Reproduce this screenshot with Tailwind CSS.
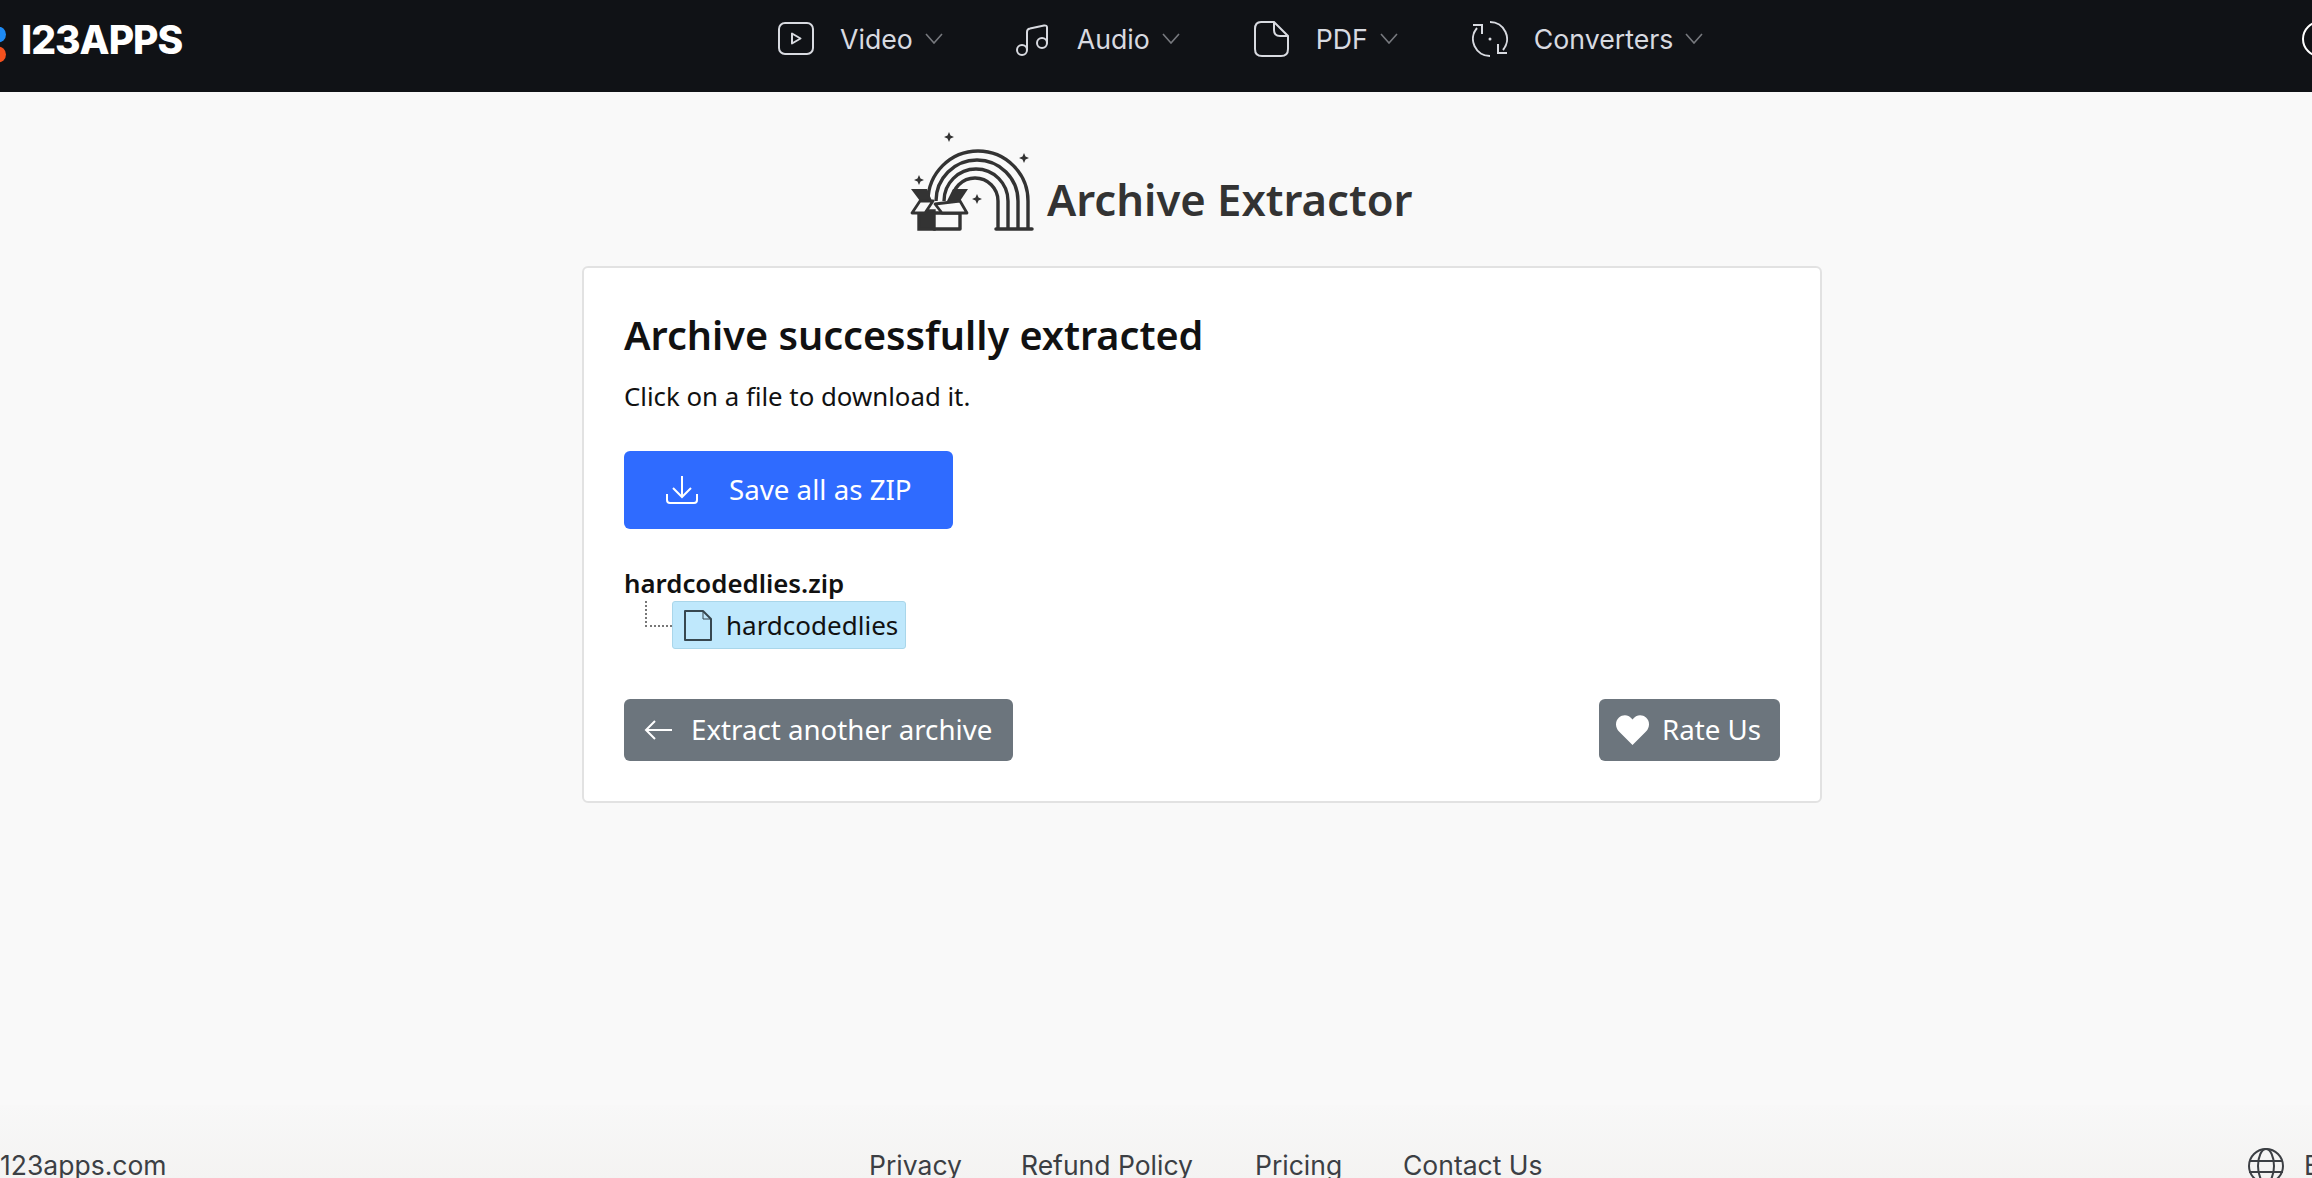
<!DOCTYPE html>
<html lang="en">
<head>
  <meta charset="UTF-8">
  <meta name="viewport" content="width=device-width, initial-scale=1.0">
  <title>Archive Extractor</title>
  <script src="https://cdn.jsdelivr.net/npm/@tailwindcss/browser@4"></script>
</head>
<body class="h-screen overflow-hidden flex flex-col bg-[#f9f9f9] font-['Noto_Sans',sans-serif]">
  <!-- top nav -->
  <header class="h-[92px] shrink-0 bg-[#101216] flex items-center font-['Inter',sans-serif] overflow-hidden">
    <svg class="w-[6px] h-[36px] shrink-0 mt-[-2px]" viewBox="0 0 6 36">
      <circle cx="-2" cy="7.5" r="8" fill="#1e8bf5"/>
      <circle cx="-2" cy="27.5" r="8" fill="#f4511e"/>
    </svg>
    <span class="ml-[15px] w-[161px] text-[39px] leading-none font-extrabold text-white tracking-[-1px] mt-[-14px]">I23APPS</span>
    <nav class="ml-[596px] flex items-center text-[26.7px] text-[#d8dae0] mt-[-14px]">
      <a class="flex items-center" href="#">
        <svg class="w-[36px] h-[36px]" viewBox="0 0 36 36" fill="none" stroke="#d8dae0" stroke-width="2"><rect x="1" y="2" width="34" height="31" rx="6"/><path d="M14 12.5v10l8.5-5z" stroke-linejoin="round"/></svg>
        <span class="ml-[26px]">Video</span>
        <svg class="ml-[12px] w-[18px] h-[11px]" viewBox="0 0 18 11" fill="none" stroke="#77797e" stroke-width="1.6"><path d="M1 1l8 9 8-9"/></svg>
      </a>
      <a class="ml-[71px] flex items-center" href="#">
        <svg class="w-[36px] h-[36px]" viewBox="0 0 36 36" fill="none" stroke="#d8dae0" stroke-width="2"><circle cx="8" cy="29" r="5"/><circle cx="28" cy="22" r="5"/><path d="M13 29V11q0-3 3-3.500l14-3q3-.5 3 2v16"/></svg>
        <span class="ml-[27px]">Audio</span>
        <svg class="ml-[12px] w-[18px] h-[11px]" viewBox="0 0 18 11" fill="none" stroke="#77797e" stroke-width="1.6"><path d="M1 1l8 9 8-9"/></svg>
      </a>
      <a class="ml-[73px] flex items-center" href="#">
        <svg class="w-[36px] h-[36px]" viewBox="0 0 36 36" fill="none" stroke="#d8dae0" stroke-width="2"><path d="M8 1h13l14 14v13q0 7-7 7H9q-7 0-7-7V8q0-7 6-7z"/><path d="M21 1v8q0 6 6 6h8"/></svg>
        <span class="ml-[27px]">PDF</span>
        <svg class="ml-[12px] w-[18px] h-[11px]" viewBox="0 0 18 11" fill="none" stroke="#77797e" stroke-width="1.6"><path d="M1 1l8 9 8-9"/></svg>
      </a>
      <a class="ml-[74px] flex items-center" href="#">
        <svg class="w-[36px] h-[36px]" viewBox="0 0 36 36" fill="none" stroke="#d8dae0" stroke-width="2"><path d="M18 1a17 17 0 0 1 13 28"/><path d="M18 35A17 17 0 0 1 5 7"/><path d="M1 4h9v9"/><path d="M35 32h-9v-9"/><circle cx="18" cy="18" r="1.500" fill="#d8dae0" stroke="none"/></svg>
        <span class="ml-[26px]">Converters</span>
        <svg class="ml-[12px] w-[18px] h-[11px]" viewBox="0 0 18 11" fill="none" stroke="#77797e" stroke-width="1.6"><path d="M1 1l8 9 8-9"/></svg>
      </a>
    </nav>
    <div class="ml-auto mr-[-26px] w-[36px] h-[36px] rounded-full border-2 border-white shrink-0 mt-[-14px]"></div>
  </header>

  <main class="flex-1 flex flex-col items-start">
    <!-- tool title -->
    <div class="ml-[910px] mt-[38px] h-[106px] flex items-end">
      <svg class="w-[125px] h-[107px] shrink-0" viewBox="20 8 125 107" fill="none" stroke="#333" stroke-width="3.400">
        <g fill="#333" stroke="none">
          <path d="M59 11l1.500 3.500 3.500 1.500-3.500 1.500-1.500 3.500-1.500-3.500-3.500-1.500 3.500-1.500z"/>
          <path d="M134 32l1.500 3.500 3.500 1.500-3.500 1.500-1.500 3.500-1.500-3.500-3.500-1.500 3.500-1.500z"/>
          <path d="M29 54l1.500 3.500 3.500 1.500-3.500 1.500-1.500 3.500-1.500-3.500-3.500-1.500 3.500-1.500z"/>
          <path d="M87 73l1.500 3.500 3.500 1.500-3.500 1.500-1.500 3.500-1.500-3.500-3.500-1.500 3.500-1.500z"/>
        </g>
        <path d="M38 80a50 50 0 0 1 100 0v28"/>
        <path d="M46 80a41 41 0 0 1 82 0v28"/>
        <path d="M54 80a32 32 0 0 1 64 0v28"/>
        <path d="M62 80a23 23 0 0 1 46 0v28"/>
        <path d="M106 108h36" stroke-width="3.500" stroke-linecap="round"/>
        <path d="M21 68h16l5 12H30z" fill="#333" stroke="none"/>
        <path d="M78 68H63l-6 12h13z" fill="#333" stroke="none"/>
        <path d="M29 90h15v18H29z" fill="#333" stroke="#333"/>
        <path d="M44 92h26v16H44z" fill="#f9f9f9" stroke-linejoin="round"/>
        <path d="M30 80h13l-8 12H22z" fill="#f9f9f9" stroke-width="2.800" stroke-linejoin="round"/>
        <path d="M45 83l25-3 7 12H52z" fill="#f9f9f9" stroke-width="2.800" stroke-linejoin="round"/>
      </svg>
      <h1 class="ml-[12px] mb-[7px] text-[43.6px] leading-[60px] font-semibold text-[#333]">Archive Extractor</h1>
    </div>

    <!-- result card -->
    <section class="ml-[582px] mt-[30px] w-[1240px] h-[537px] bg-white border-2 border-[#e2e2e2] rounded-[6px] px-[40px] pt-[40px] flex flex-col">
      <h2 class="text-[39.6px] leading-[54px] font-semibold text-[#111]">Archive successfully extracted</h2>
      <p class="mt-[16px] text-[25.8px] leading-[36px] text-[#111]">Click on a file to download it.</p>
      <button class="mt-[37px] w-[329px] h-[78px] rounded-[6px] bg-[#2f6bff] text-white text-[27.7px] flex items-center pl-[41px]">
        <svg class="w-[34px] h-[28px] shrink-0" viewBox="0 0 34 28" fill="none" stroke="#fff" stroke-width="2"><path d="M17 0v20M8 12l9 9 9-9"/><path d="M2 18v6q0 3 3 3h24q3 0 3-3v-6"/></svg>
        <span class="ml-[30px]">Save all as ZIP</span>
      </button>

      <div class="mt-[36px] text-[25.8px] leading-[36px] font-semibold text-[#111]">hardcodedlies.zip</div>
      <div class="flex">
        <div class="ml-[21px] w-[27px] h-[26px] border-l-2 border-b-2 border-dotted border-[#777]"></div>
        <div class="h-[48px] w-[234px] rounded-[3px] bg-[#bfe8fc] border border-[#a9d6ea] flex items-center pl-[10px] text-[26px] text-[#111]">
          <svg class="w-[30px] h-[33px] shrink-0" viewBox="0 0 30 33" fill="none" stroke="#37474f" stroke-width="2"><path d="M2 2h18l8 8v21H2z" stroke-linejoin="round"/><path d="M20 2v8h8" stroke-width="1"/></svg>
          <span class="ml-[13px]">hardcodedlies</span>
        </div>
      </div>

      <div class="mt-[50px] flex justify-between text-[27.7px] text-white">
        <button class="w-[389px] h-[62px] rounded-[6px] bg-[#6c757d] flex items-center pl-[20px]">
          <svg class="w-[28px] h-[20px] shrink-0" viewBox="0 0 28 20" fill="none" stroke="#fff" stroke-width="2"><path d="M28 10H2M11 1l-9 9 9 9"/></svg>
          <span class="ml-[19px]">Extract another archive</span>
        </button>
        <button class="w-[181px] h-[62px] rounded-[6px] bg-[#6c757d] flex items-center pl-[17px]">
          <svg class="w-[33px] h-[30px] shrink-0" viewBox="0 0 33 30" fill="#fff"><path d="M16.500 30L3 16.500C-1 12-1 6 3 2.500c4-3.500 10-3 13.500 2 3.500-5 9.500-5.500 13.500-2 4 3.500 4 9.500 0 14z"/></svg>
          <span class="ml-[13px]">Rate Us</span>
        </button>
      </div>
    </section>
  </main>

  <footer class="h-[73px] shrink-0 bg-gradient-to-b from-[#f8f8f8] to-[#f4f3f2] pt-[44px] flex items-start font-['Inter',sans-serif] text-[26.5px] leading-[32px] text-[#3c3f44]">
    <span class="w-[869px] shrink-0">123apps.com</span>
    <a class="w-[152px] shrink-0" href="#">Privacy</a>
    <a class="w-[234px] shrink-0" href="#">Refund Policy</a>
    <a class="w-[148px] shrink-0" href="#">Pricing</a>
    <a class="w-[845px] shrink-0" href="#">Contact Us</a>
    <svg class="w-[36px] h-[36px] shrink-0 mt-[-1px]" viewBox="0 0 36 36" fill="none" stroke="#3c3f44" stroke-width="2"><circle cx="18" cy="18" r="17"/><ellipse cx="18" cy="18" rx="8" ry="17"/><path d="M1 13h34M1 24h34"/></svg>
    <span class="ml-[20px] shrink-0">E</span>
  </footer>
</body>
</html>
